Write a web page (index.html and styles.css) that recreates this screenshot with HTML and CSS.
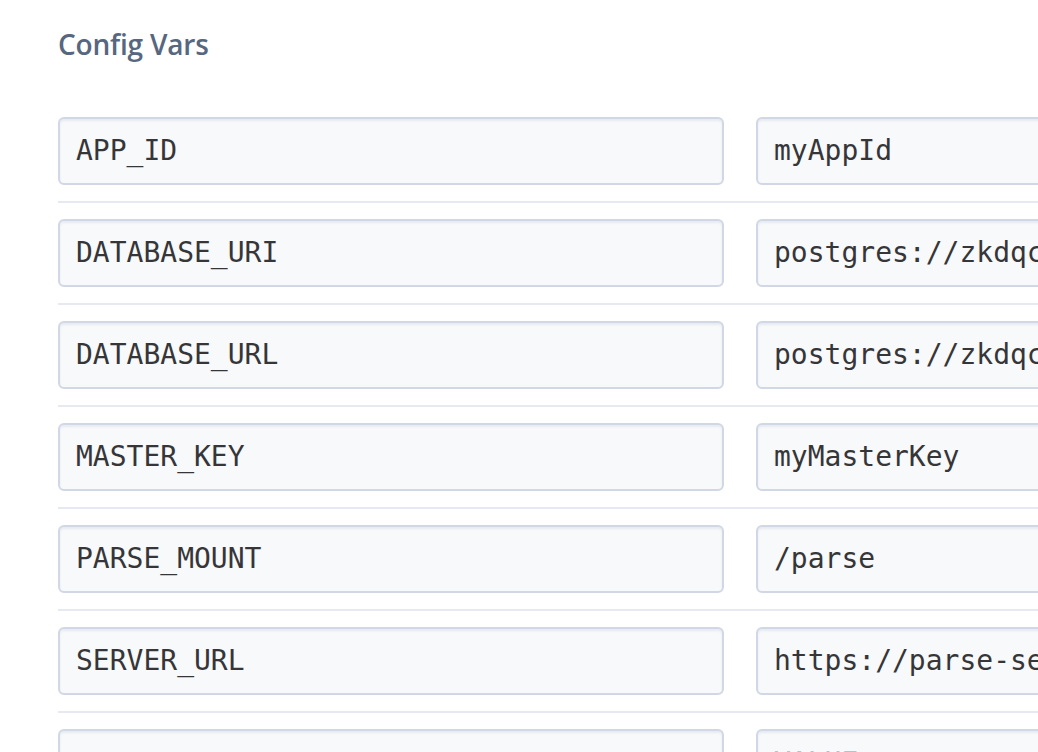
FILE: index.html
```html
<!DOCTYPE html>
<html>
<head>
<meta charset="utf-8">
<link rel="stylesheet" href="styles.css">
</head>
<body>
<div class="page">
  <h2 class="title">Config Vars</h2>
  <div class="vars">
    <div class="row"><div class="field">APP_ID</div><div class="field">myAppId</div></div>
    <div class="row"><div class="field">DATABASE_URI</div><div class="field">postgres://zkdqcbxvnmfhlp:9c2e1a7d4b@ec2-54-83-1-101.compute-1.amazonaws.com:5432/d8a7k3</div></div>
    <div class="row"><div class="field">DATABASE_URL</div><div class="field">postgres://zkdqcbxvnmfhlp:9c2e1a7d4b@ec2-54-83-1-101.compute-1.amazonaws.com:5432/d8a7k3</div></div>
    <div class="row"><div class="field">MASTER_KEY</div><div class="field">myMasterKey</div></div>
    <div class="row"><div class="field">PARSE_MOUNT</div><div class="field">/parse</div></div>
    <div class="row"><div class="field">SERVER_URL</div><div class="field">https://parse-server-example.herokuapp.com/parse</div></div>
    <div class="row last"><div class="field placeholder"></div><div class="field placeholder">VALUE</div></div>
  </div>
</div>
</body>
</html>
```
FILE: styles.css
```css
html, body {
  margin: 0;
  padding: 0;
  background: #ffffff;
  overflow: hidden;
}
.page {
  padding: 25px 0 0 58px;
  width: 1500px;
}
.title {
  margin: 0;
  font-family: "Open Sans", "Noto Sans", sans-serif;
  font-weight: 600;
  font-size: 28px;
  line-height: 38px;
  color: #56677f;
  letter-spacing: -0.2px;
}
.vars {
  margin-top: 54px;
}
.row {
  display: grid;
  grid-template-columns: 666px 666px;
  column-gap: 32px;
  padding-bottom: 16px;
  margin-bottom: 16px;
  border-bottom: 2px solid #e6e9f1;
}
.field {
  box-sizing: border-box;
  height: 68px;
  padding: 0 16px;
  border: 2px solid #d1d7e5;
  border-radius: 6px;
  background: #f8f9fb;
  box-shadow: inset 0 2px 2px rgba(180, 190, 210, 0.25);
  font-family: "DejaVu Sans Mono", monospace;
  font-size: 28px;
  line-height: 64px;
  color: #363638;
  white-space: nowrap;
  overflow: hidden;
}
.placeholder {
  color: #b9bfcc;
}
```
